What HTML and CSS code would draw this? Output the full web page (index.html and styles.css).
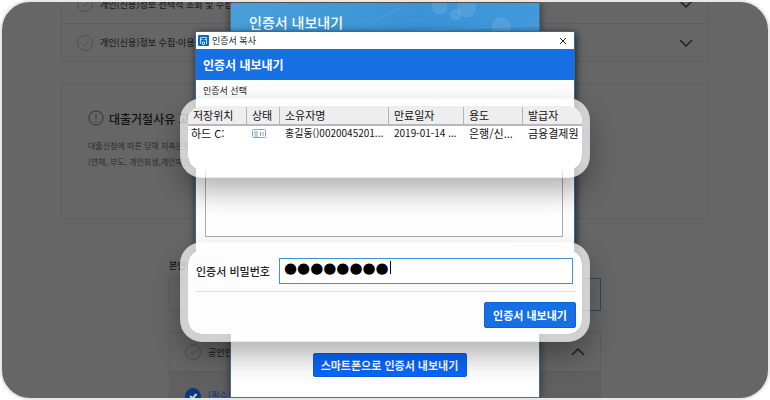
FILE: index.html
```html
<!DOCTYPE html>
<html lang="ko">
<head>
    <meta charset="UTF-8">
    <meta name="viewport" content="width=device-width, initial-scale=1.0">
    <title>인증서 내보내기</title>
    <link rel="stylesheet" href="styles.css">
</head>
<body>
    <div class="frame">

        <!-- Page behind the popups -->
        <main class="page">
            <ul class="agree-list">
                <li>
                    <svg class="check" viewBox="0 0 16 16"><circle cx="8" cy="8" r="7.5"/><path d="M5 8l2.5 2.5L11.500 6"/></svg>
                    <span>개인(신용)정보 선택적 조회 및 수집</span>
                    <svg class="arrow" viewBox="0 0 14 8"><path d="M1 1l6 6 6-6"/></svg>
                </li>
                <li>
                    <svg class="check" viewBox="0 0 16 16"><circle cx="8" cy="8" r="7.5"/><path d="M5 8l2.5 2.5L11.500 6"/></svg>
                    <span>개인(신용)정보 수집·이용</span>
                    <svg class="arrow" viewBox="0 0 14 8"><path d="M1 1l6 6 6-6"/></svg>
                </li>
            </ul>

            <section class="notice">
                <h2>
                    <svg viewBox="0 0 16 16"><circle cx="8" cy="8" r="7"/><path d="M8 4v5M8 11v1"/></svg>
                    대출거절사유 고
                </h2>
                <p>대출신청에 따른 당해 저축은행</p>
                <p>(연체, 부도, 개인회생,개인파산</p>
            </section>

            <section class="auth">
                <label for="auth-name">본인인</label>
                <div class="auth-fields">
                    <input type="text" id="auth-name">
                    <input type="text" class="active" aria-label="인증번호">
                </div>
                <ul class="agree-list">
                    <li>
                        <svg class="check" viewBox="0 0 16 16"><circle cx="8" cy="8" r="7.5"/><path d="M5 8l2.5 2.5L11.500 6"/></svg>
                        <span>공인인</span>
                        <svg class="arrow" viewBox="0 0 14 8"><path d="M1 7l6-6 6 6"/></svg>
                    </li>
                    <li class="checked">
                        <svg class="check" viewBox="0 0 16 16"><circle cx="8" cy="8" r="7.5"/><path d="M5 8l2.5 2.5L11.500 6"/></svg>
                        <span>[필수]</span>
                    </li>
                </ul>
            </section>
        </main>

        <!-- Browser popup -->
        <div class="popup">
            <header>
                <h1>인증서 내보내기</h1>
                <svg class="bubbles" viewBox="0 0 310 28" preserveAspectRatio="none">
                    <circle cx="210" cy="4" r="7"/><circle cx="237" cy="5" r="9"/><circle cx="226" cy="12" r="5"/><circle cx="272" cy="24" r="9"/>
                    <path d="M130 26L172 4M180 28L310 22"/>
                </svg>
            </header>
            <footer>
                <button type="button" class="btn btn-phone">스마트폰으로 인증서 내보내기</button>
            </footer>
        </div>

        <!-- Certificate dialog -->
        <div class="dialog">
            <div class="title-bar">
                <svg class="app-icon" viewBox="0 0 11 11"><rect width="11" height="11" rx="1"/><path d="M2.500 9V2.500h6V9M2.500 4.500h2M6.500 4.500h2M4.500 7h2v2.500h-2z"/></svg>
                <span>인증서 복사</span>
                <button type="button" class="close" aria-label="닫기">
                    <svg viewBox="0 0 8 8"><path d="M1 1l6 6M7 1L1 7"/></svg>
                </button>
            </div>
            <h2>인증서 내보내기</h2>
            <p>인증서 선택</p>
            <div class="cert-box"></div>
            <button type="button" class="view-btn">인증서보기</button>
        </div>

        <!-- Highlighted areas -->
        <div class="highlight highlight-table">
            <table>
                <colgroup>
                    <col class="col-place"><col class="col-state"><col class="col-owner"><col class="col-date"><col class="col-use"><col>
                </colgroup>
                <thead>
                    <tr><th>저장위치</th><th>상태</th><th>소유자명</th><th>만료일자</th><th>용도</th><th>발급자</th></tr>
                </thead>
                <tbody>
                    <tr>
                        <td>하드 C:</td>
                        <td><svg class="cert-icon" viewBox="0 0 14 9"><rect x="0.500" y="0.500" width="13" height="8" rx="1"/><circle cx="4" cy="4" r="1.500"/><path d="M2 7h4M8.500 3v4M11 3v4"/></svg></td>
                        <td class="small">홍길동()0020045201...</td>
                        <td class="small">2019-01-14 ...</td>
                        <td>은행/신...</td>
                        <td>금융결제원</td>
                    </tr>
                </tbody>
            </table>
        </div>

        <form class="highlight highlight-form">
            <div class="form-group">
                <label for="cert-password">인증서 비밀번호</label>
                <div class="password">
                    <input type="text" id="cert-password" value="●●●●●●●●" autocomplete="off">
                    <span class="caret"></span>
                </div>
            </div>
            <div class="actions">
                <button type="button" class="btn">인증서 내보내기</button>
            </div>
        </form>
    </div>
</body>
</html>
```

FILE: styles.css
```css
* {
    box-sizing: border-box;
}

body {
    margin: 0;
    background: white;
    font-family: "Noto Sans CJK KR", sans-serif;
    font-size: 11px;
    color: #222;
}

h1, h2, p, ul {
    margin: 0;
    padding: 0;
}

svg {
    fill: none;
    display: block;
    flex: none;
}

input, button {
    font-family: inherit;
}

.frame {
    position: relative;
    height: 100vh;
    overflow: hidden;
    border: 2px solid #e8e8e8;
    border-radius: 30px;
    background: #666;
}

/* Page behind the popups */
.page {
    padding: 0 59px;
}

.agree-list {
    list-style: none;
    border: 1px solid #5e5e5e;
}

.page > .agree-list {
    margin-top: -18px;
}

.agree-list li {
    display: flex;
    align-items: center;
    gap: 7px;
    height: 38px;
    padding: 0 15px;
    font-size: 9px;
    font-weight: 500;
    white-space: nowrap;
}

.agree-list li + li {
    border-top: 1px solid #5e5e5e;
}

.check {
    width: 16px;
    height: 16px;
    stroke: #505050;
}

.arrow {
    width: 14px;
    height: 8px;
    margin-left: auto;
    stroke: #222;
    stroke-width: 1.5;
}

.notice {
    height: 136px;
    margin-top: 21px;
    padding: 24px 26px;
    border: 1px solid #5e5e5e;
    color: #2c2c2c;
}

.notice h2 {
    display: flex;
    align-items: center;
    gap: 5px;
    height: 20px;
    margin-bottom: 10px;
    font-size: 12px;
    font-weight: 500;
    color: #111;
}

.notice h2 svg {
    width: 16px;
    height: 16px;
    stroke: #333;
}

.notice p {
    font-size: 8px;
    line-height: 16px;
}

.auth {
    margin: 39px 108px 0;
}

.auth label {
    display: block;
    height: 20px;
    font-size: 9px;
    font-weight: 500;
    line-height: 16px;
    color: #111;
}

.auth-fields {
    display: flex;
    gap: 10px;
    margin-bottom: 21px;
}

.auth-fields input {
    flex: 1;
    min-width: 0;
    height: 33px;
    border: 1px solid #5a5a5a;
    background: none;
}

.auth-fields .active {
    border-color: #27466e;
}

.agree-list .checked {
    height: 48px;
    background: #606060;
    color: #1d3f75;
}

.checked .check {
    fill: #0b3a7c;
    stroke: #0b3a7c;
}

.checked .check path {
    fill: none;
    stroke: #ccc;
    stroke-width: 2;
}

/* Browser popup */
.popup {
    position: absolute;
    top: 1px;
    bottom: 0;
    left: 0;
    right: 0;
    width: 310px;
    margin: 0 auto;
    display: flex;
    flex-direction: column;
    justify-content: space-between;
    border: 1px solid #48708c;
    border-top: 0;
    background: white;
    box-shadow: 0 0 8px rgba(0, 0, 0, 0.5);
}

.popup header {
    position: relative;
    height: 40px;
    padding: 6px 18px;
    background: linear-gradient(100deg, #4a9fd8, #3a93d5 60%, #4299dc);
}

.popup h1 {
    font-size: 14px;
    font-weight: 500;
    line-height: 26px;
    color: white;
}

.bubbles {
    position: absolute;
    top: 0;
    left: 0;
    width: 100%;
    height: 28px;
    fill: rgba(255, 255, 255, 0.1);
    stroke: rgba(255, 255, 255, 0.1);
}

.popup footer {
    padding: 0 0 20px 9px;
    text-align: center;
}

.btn {
    height: 26px;
    padding: 0;
    border: 1px solid #0f62cf;
    border-radius: 2px;
    background: #1670e3;
    color: white;
    font-size: 11px;
    font-weight: 700;
    line-height: 22px;
    cursor: pointer;
}

.btn-phone {
    width: 154px;
    height: 24px;
    border-color: #0a5ee0;
    background: #0867fa;
}

/* Certificate dialog */
.dialog {
    position: absolute;
    top: 29px;
    left: 0;
    right: 0;
    width: 380px;
    height: 290px;
    margin: 0 auto;
    border: 1px solid #2f6f9f;
    background: #fdfdfd;
    box-shadow: 1px 2px 8px rgba(0, 0, 0, 0.7);
}

.title-bar {
    display: flex;
    align-items: center;
    gap: 3px;
    height: 17px;
    padding: 0 6px 0 2px;
    background: white;
    font-size: 9px;
}

.app-icon {
    width: 11px;
    height: 11px;
    fill: #1763c9;
}

.app-icon path {
    fill: none;
    stroke: #b9dcff;
}

.close {
    margin-left: auto;
    padding: 1px;
    border: 0;
    background: none;
}

.close svg {
    width: 8px;
    height: 8px;
    stroke: #222;
}

.dialog h2 {
    padding-left: 7px;
    background: #1670e3;
    color: white;
    font-size: 12px;
    line-height: 31px;
}

.dialog p {
    padding-left: 7px;
    font-size: 9px;
    line-height: 22px;
}

.cert-box {
    height: 127px;
    margin: 8px 11px 8px 9px;
    border: 1px solid #a9a9b3;
    background: white;
}

.view-btn {
    display: block;
    width: 50px;
    height: 18px;
    margin: 0 12px 0 auto;
    padding: 0;
    border: 1px solid #e2e2e2;
    background: #fdfdfd;
    color: #aaa;
    font-size: 8px;
    line-height: 12px;
}

/* Highlighted areas */
.highlight {
    position: absolute;
    left: 0;
    right: 0;
    width: 410px;
    margin: 0 auto;
    border: 8px solid rgba(255, 255, 255, 0.7);
    border-radius: 22px;
    background: white;
    background-clip: padding-box;
    box-shadow: 0 14px 28px rgba(0, 0, 0, 0.3);
    overflow: hidden;
}

.highlight-table {
    top: 96px;
    height: 80px;
}

.highlight-form {
    top: 240px;
    height: 100px;
    padding: 8px 6px 0 8px;
    background-color: #fdfdfd;
}

table {
    width: 100%;
    table-layout: fixed;
    border-collapse: collapse;
    color: #111;
}

.col-place { width: 59px; }
.col-state { width: 33px; }
.col-owner { width: 109px; }
.col-date { width: 75px; }
.col-use { width: 59px; }

th, td {
    padding: 0 0 0 5px;
    font-size: 11px;
    font-weight: 400;
    line-height: 18px;
    text-align: left;
    white-space: nowrap;
}

th {
    border-bottom: 2px solid #b8b8c0;
    background: linear-gradient(#b4b4b4, #b4b4b4) right center / 1px 17px no-repeat #eee;
}

th:last-child {
    background: #eee;
}

td {
    line-height: 14px;
}

td:first-child {
    padding-left: 3px;
}

td.small {
    font-size: 10px;
}

.cert-icon {
    width: 14px;
    height: 9px;
    stroke: #8fa3b5;
}

.form-group {
    display: flex;
    align-items: center;
    margin-right: 3px;
}

.form-group label {
    width: 83px;
    font-weight: 500;
}

.password {
    position: relative;
    flex: 1;
}

.password input {
    display: block;
    width: 100%;
    height: 26px;
    padding: 0 4px 6px;
    border: 1px solid #3d94d8;
    outline: 0;
    background: white;
    color: black;
    font-family: "DejaVu Sans", sans-serif;
    font-size: 15px;
}

.caret {
    position: absolute;
    top: 3px;
    left: 111px;
    width: 1px;
    height: 13px;
    background: black;
}

.actions {
    margin-top: 7px;
    padding-top: 10px;
    border-top: 1px solid #e0e0e0;
    text-align: right;
}

.actions .btn {
    width: 92px;
}
```
